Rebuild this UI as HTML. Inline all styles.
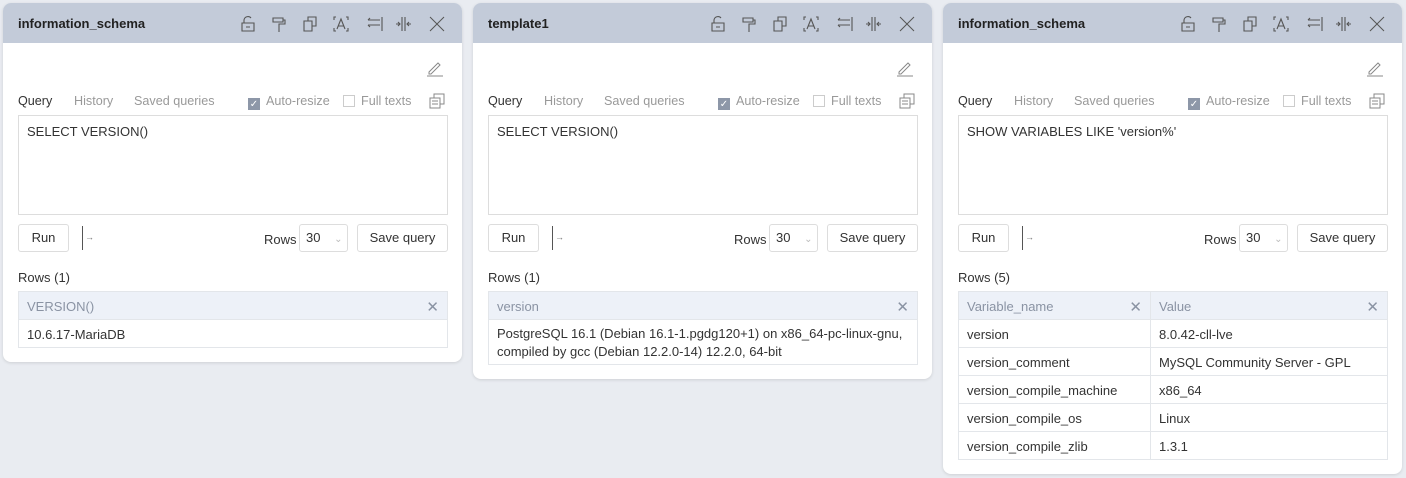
<!DOCTYPE html>
<html><head><meta charset="utf-8"><style>
*{box-sizing:border-box;margin:0;padding:0}
body{width:1406px;height:478px;background:#e9ecf1;font-family:"Liberation Sans",sans-serif;font-size:13px;color:#333;position:relative;overflow:hidden}
.p{position:absolute;top:3px;width:459px;background:#fff;border-radius:8px;box-shadow:0 1px 3px rgba(0,0,0,.12);overflow:hidden}
.h{height:40px;background:#c3cbd9;position:relative}
.h .t{position:absolute;left:15px;top:13px;font-weight:bold;font-size:13px;color:#222}
.h svg{position:absolute;top:12px}
.a{position:absolute}
.tab{position:absolute;top:91px;color:#999;font-size:12.6px}
.ta{position:absolute;left:15px;top:112px;width:430px;height:100px;border:1px solid #ddd;padding:8px 8px;}
.btn{position:absolute;top:221px;height:28px;border:1px solid #ddd;border-radius:3px;text-align:center;line-height:26px;background:#fff}
.cb{display:inline-block;width:12px;height:12px;border:1px solid #ccc;vertical-align:-2px;margin-right:6px;color:#fff;font-size:10px;line-height:11px;text-align:center}
table{position:absolute;left:15px;top:288px;width:430px;border-collapse:collapse}
td,th{border:1px solid #e3e6ea;height:28px;padding:1px 8px 0;text-align:left;font-weight:normal;position:relative}
th{background:#edf1f8;color:#8a93a3}
th .x{position:absolute;right:8px;top:6px;font-size:15px;color:#8a93a3}
</style></head><body>

<!-- Panel 1 -->
<div class="p" style="left:3px;height:359px">
 <div class="h"><span class="t">information_schema</span>
 <svg style="left:237px" width="210" height="18" viewBox="0 0 210 18" fill="none" stroke="#555" stroke-width="1.1">
  <path d="M2 8h12v8H2z M6 12h4 M4 8V5a4 4 0 0 1 7-2"/>
  <path d="M33 3h10v4H33z M43 5h2v4h-6v8 M33 3v2"/>
  <path d="M64 6h8v10h-8z M68 6V2h8v9h-4"/>
  <path d="M96 2h-2v3 M106 2h2v3 M96 16h-2v-3 M106 16h2v-3 M97 14l4-10 4 10 M98 11h6"/>
  <path d="M128 5h12 M128 10h12 M142 2v14 M128 5l2-2 M128 10l2 2"/>
  <path d="M162 2v14 M165 2v14 M156 9h4 M171 9h-4 M158 7l2 2-2 2 M169 7l-2 2 2 2"/>
  <path d="M190 2l14 14 M204 2l-14 14" stroke-width="1"/>
 </svg></div>
 <svg class="a" style="left:424px;top:56px" width="16" height="18" fill="none" stroke="#888" stroke-width="1"><path d="M2 13l9-9 2 2-9 9H2z M0 17h16"/></svg>
 <span class="tab" style="left:15px;color:#333">Query</span>
 <span class="tab" style="left:71px">History</span>
 <span class="tab" style="left:131px">Saved queries</span>
 <span class="tab" style="left:245px"><span class="cb" style="background:#8d97a8;border-color:#8d97a8">✓</span>Auto-resize</span>
 <span class="tab" style="left:340px"><span class="cb"></span>Full texts</span>
 <svg class="a" style="left:426px;top:90px" width="16" height="16" fill="none" stroke="#888"><path d="M1 5h10v10H1z M5 5V1h10v10h-4 M3 8h6 M3 11h6"/></svg>
 <div class="ta">SELECT VERSION()</div>
 <div class="btn" style="left:15px;width:51px">Run</div>
 <div class="a" style="left:79px;top:223px;width:1px;height:24px;background:#555"></div><span class="a" style="left:82px;top:229px;font-size:9px;color:#777">→</span>
 <span class="a" style="left:261px;top:229px">Rows</span>
 <div class="btn" style="left:296px;width:49px;text-align:left;padding-left:6px">30 <span style="color:#bbb;font-size:10px;margin-left:10px">&#8964;</span></div>
 <div class="btn" style="left:354px;width:91px">Save query</div>
 <span class="a" style="left:15px;top:267px">Rows (1)</span>
 <table><tr><th>VERSION()<span class="x">✕</span></th></tr><tr><td>10.6.17-MariaDB</td></tr></table>
</div>

<!-- Panel 2 -->
<div class="p" style="left:473px;height:376px">
 <div class="h"><span class="t">template1</span>
 <svg style="left:237px" width="210" height="18" viewBox="0 0 210 18" fill="none" stroke="#555" stroke-width="1.1">
  <path d="M2 8h12v8H2z M6 12h4 M4 8V5a4 4 0 0 1 7-2"/>
  <path d="M33 3h10v4H33z M43 5h2v4h-6v8 M33 3v2"/>
  <path d="M64 6h8v10h-8z M68 6V2h8v9h-4"/>
  <path d="M96 2h-2v3 M106 2h2v3 M96 16h-2v-3 M106 16h2v-3 M97 14l4-10 4 10 M98 11h6"/>
  <path d="M128 5h12 M128 10h12 M142 2v14 M128 5l2-2 M128 10l2 2"/>
  <path d="M162 2v14 M165 2v14 M156 9h4 M171 9h-4 M158 7l2 2-2 2 M169 7l-2 2 2 2"/>
  <path d="M190 2l14 14 M204 2l-14 14" stroke-width="1"/>
 </svg></div>
 <svg class="a" style="left:424px;top:56px" width="16" height="18" fill="none" stroke="#888" stroke-width="1"><path d="M2 13l9-9 2 2-9 9H2z M0 17h16"/></svg>
 <span class="tab" style="left:15px;color:#333">Query</span>
 <span class="tab" style="left:71px">History</span>
 <span class="tab" style="left:131px">Saved queries</span>
 <span class="tab" style="left:245px"><span class="cb" style="background:#8d97a8;border-color:#8d97a8">✓</span>Auto-resize</span>
 <span class="tab" style="left:340px"><span class="cb"></span>Full texts</span>
 <svg class="a" style="left:426px;top:90px" width="16" height="16" fill="none" stroke="#888"><path d="M1 5h10v10H1z M5 5V1h10v10h-4 M3 8h6 M3 11h6"/></svg>
 <div class="ta">SELECT VERSION()</div>
 <div class="btn" style="left:15px;width:51px">Run</div>
 <div class="a" style="left:79px;top:223px;width:1px;height:24px;background:#555"></div><span class="a" style="left:82px;top:229px;font-size:9px;color:#777">→</span>
 <span class="a" style="left:261px;top:229px">Rows</span>
 <div class="btn" style="left:296px;width:49px;text-align:left;padding-left:6px">30 <span style="color:#bbb;font-size:10px;margin-left:10px">&#8964;</span></div>
 <div class="btn" style="left:354px;width:91px">Save query</div>
 <span class="a" style="left:15px;top:267px">Rows (1)</span>
 <table><tr><th>version<span class="x">✕</span></th></tr><tr><td style="height:45px;line-height:18px">PostgreSQL 16.1 (Debian 16.1-1.pgdg120+1) on x86_64-pc-linux-gnu, compiled by gcc (Debian 12.2.0-14) 12.2.0, 64-bit</td></tr></table>
</div>

<!-- Panel 3 -->
<div class="p" style="left:943px;height:471px">
 <div class="h"><span class="t">information_schema</span>
 <svg style="left:237px" width="210" height="18" viewBox="0 0 210 18" fill="none" stroke="#555" stroke-width="1.1">
  <path d="M2 8h12v8H2z M6 12h4 M4 8V5a4 4 0 0 1 7-2"/>
  <path d="M33 3h10v4H33z M43 5h2v4h-6v8 M33 3v2"/>
  <path d="M64 6h8v10h-8z M68 6V2h8v9h-4"/>
  <path d="M96 2h-2v3 M106 2h2v3 M96 16h-2v-3 M106 16h2v-3 M97 14l4-10 4 10 M98 11h6"/>
  <path d="M128 5h12 M128 10h12 M142 2v14 M128 5l2-2 M128 10l2 2"/>
  <path d="M162 2v14 M165 2v14 M156 9h4 M171 9h-4 M158 7l2 2-2 2 M169 7l-2 2 2 2"/>
  <path d="M190 2l14 14 M204 2l-14 14" stroke-width="1"/>
 </svg></div>
 <svg class="a" style="left:424px;top:56px" width="16" height="18" fill="none" stroke="#888" stroke-width="1"><path d="M2 13l9-9 2 2-9 9H2z M0 17h16"/></svg>
 <span class="tab" style="left:15px;color:#333">Query</span>
 <span class="tab" style="left:71px">History</span>
 <span class="tab" style="left:131px">Saved queries</span>
 <span class="tab" style="left:245px"><span class="cb" style="background:#8d97a8;border-color:#8d97a8">✓</span>Auto-resize</span>
 <span class="tab" style="left:340px"><span class="cb"></span>Full texts</span>
 <svg class="a" style="left:426px;top:90px" width="16" height="16" fill="none" stroke="#888"><path d="M1 5h10v10H1z M5 5V1h10v10h-4 M3 8h6 M3 11h6"/></svg>
 <div class="ta">SHOW VARIABLES LIKE 'version%'</div>
 <div class="btn" style="left:15px;width:51px">Run</div>
 <div class="a" style="left:79px;top:223px;width:1px;height:24px;background:#555"></div><span class="a" style="left:82px;top:229px;font-size:9px;color:#777">→</span>
 <span class="a" style="left:261px;top:229px">Rows</span>
 <div class="btn" style="left:296px;width:49px;text-align:left;padding-left:6px">30 <span style="color:#bbb;font-size:10px;margin-left:10px">&#8964;</span></div>
 <div class="btn" style="left:354px;width:91px">Save query</div>
 <span class="a" style="left:15px;top:267px">Rows (5)</span>
 <table><tr><th style="width:192px">Variable_name<span class="x">✕</span></th><th>Value<span class="x">✕</span></th></tr>
 <tr><td>version</td><td>8.0.42-cll-lve</td></tr>
 <tr><td>version_comment</td><td>MySQL Community Server - GPL</td></tr>
 <tr><td>version_compile_machine</td><td>x86_64</td></tr>
 <tr><td>version_compile_os</td><td>Linux</td></tr>
 <tr><td>version_compile_zlib</td><td>1.3.1</td></tr></table>
</div>
</body></html>
